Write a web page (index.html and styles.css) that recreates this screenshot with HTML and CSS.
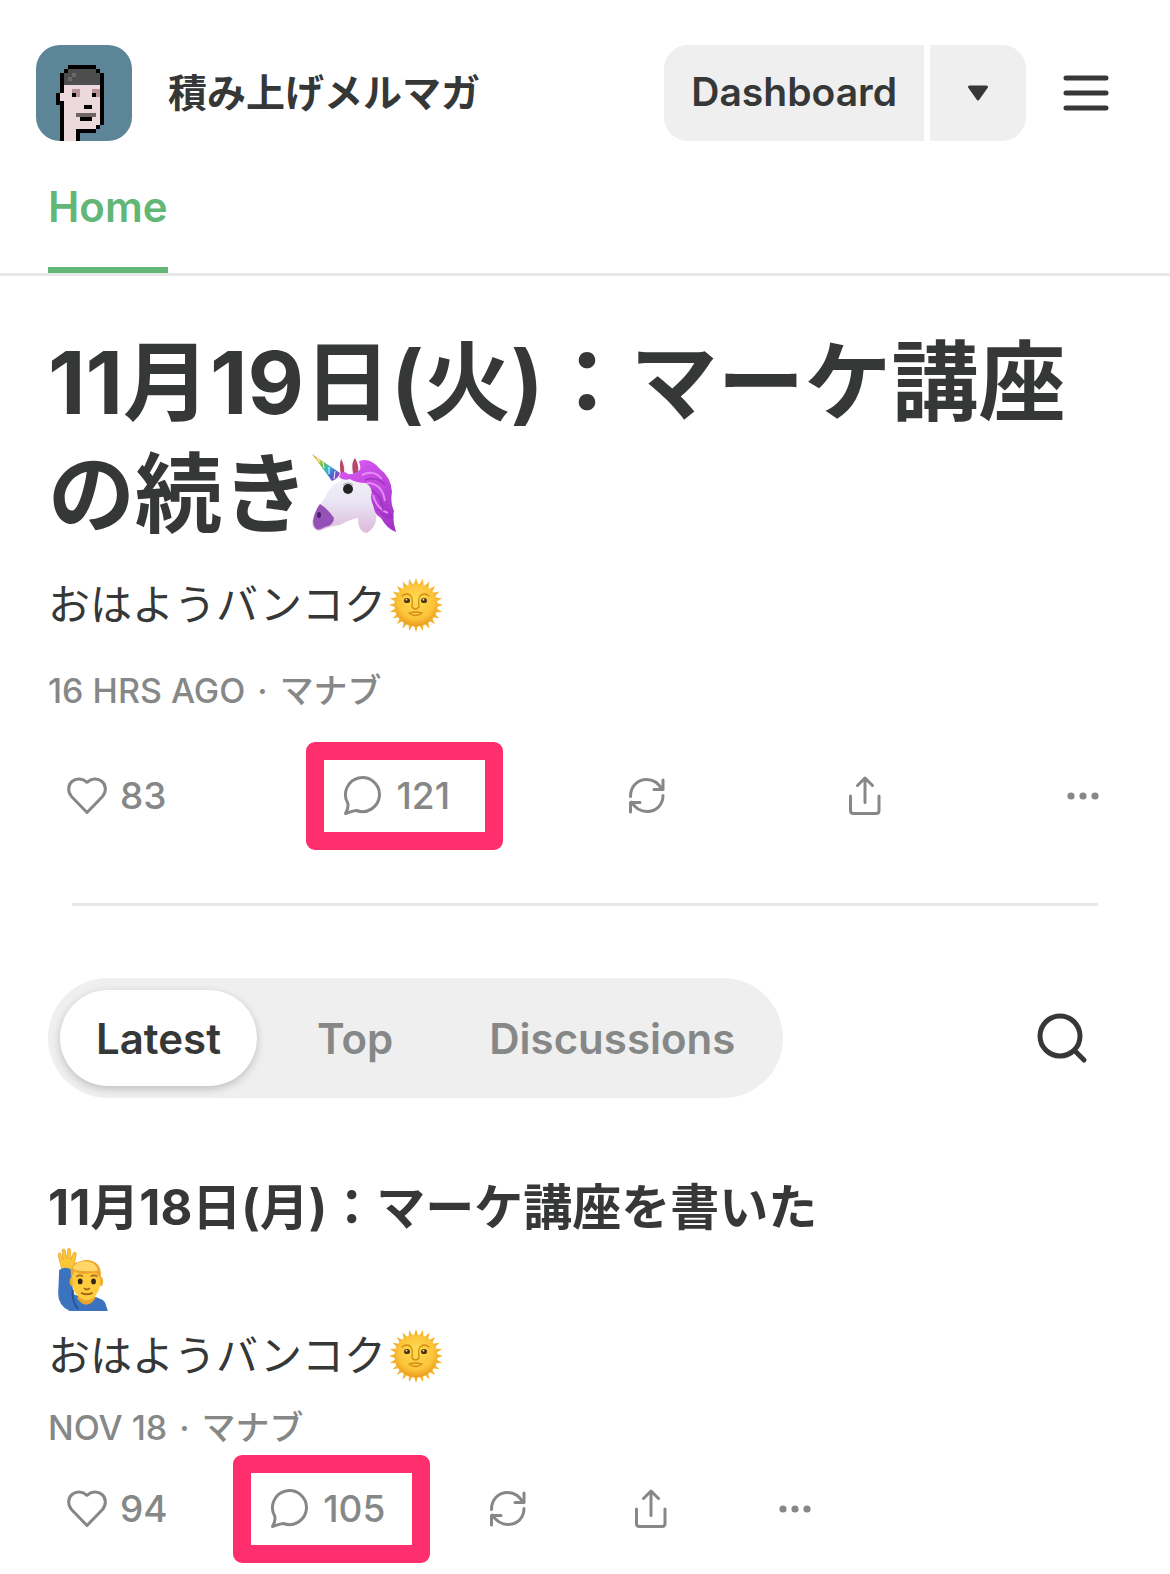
FILE: index.html
```html
<!DOCTYPE html>
<html lang="ja">
<head>
    <meta charset="UTF-8">
    <meta name="viewport" content="width=device-width, initial-scale=1.0">
    <title>積み上げメルマガ</title>
    <link rel="stylesheet" href="styles.css">
</head>
<body>
    <!-- Shared icons -->
    <svg class="sprite" aria-hidden="true">
        <symbol id="icon-heart" viewBox="0 0 42 42">
            <path d="M21 37.500 L5.500 21.500 C1.500 17 1.800 10 6 6.500 C10.500 2.800 16.500 3.300 21 7.300 C25.500 3.300 31.500 2.800 36 6.500 C40.200 10 40.500 17 36.500 21.500 Z"/>
        </symbol>
        <symbol id="icon-comment" viewBox="0 0 42 42">
            <path d="M3.500 38.500 C5.500 35 6.500 31 5.700 28 A17 17 0 1 1 14.500 35.500 C11 35.500 8 37.500 3.500 38.500 Z"/>
        </symbol>
        <symbol id="icon-restack" viewBox="0 0 42 42">
            <path d="M4.500 21.500 C4.500 11 12 4.500 20.500 4.500 C28 4.500 33 9 36 14.500 M37 5 V14.500 H28 M37 20.500 C37 30 30 36.500 21 36.500 C13.500 36.500 8.500 32 5.500 27 M4.500 37 V27.500 H14"/>
        </symbol>
        <symbol id="icon-share" viewBox="0 0 42 42">
            <path d="M21 27.500 V3 M13.500 10.500 L21 3 L28.500 10.500 M6.500 21 V35.500 Q6.500 38.500 9.500 38.500 H32 Q35 38.500 35 35.500 V21"/>
        </symbol>
        <symbol id="icon-more" viewBox="0 0 42 42">
            <g fill="currentColor" stroke="none">
                <circle cx="9" cy="21" r="3.600"/>
                <circle cx="21" cy="21" r="3.600"/>
                <circle cx="33" cy="21" r="3.600"/>
            </g>
        </symbol>
        <symbol id="emoji-sun" viewBox="0 0 54 54">
            <g fill="#f5b52e">
                <path id="rays" d="M27 0 L30 9 H24 Z M27 54 L30 45 H24 Z M0 27 L9 24 V30 Z M54 27 L45 24 V30 Z"/>
                <use href="#rays" transform="rotate(15 27 27)"/>
                <use href="#rays" transform="rotate(30 27 27)"/>
                <use href="#rays" transform="rotate(45 27 27)"/>
                <use href="#rays" transform="rotate(60 27 27)"/>
                <use href="#rays" transform="rotate(75 27 27)"/>
            </g>
            <circle cx="27" cy="27" r="21.500" fill="url(#sunFace)"/>
            <ellipse cx="18" cy="22.500" rx="3" ry="2.600" fill="#4a3210"/>
            <ellipse cx="35" cy="22.500" rx="3" ry="2.600" fill="#4a3210"/>
            <circle cx="17.500" cy="21.700" r="0.900" fill="#fff2b0"/>
            <circle cx="34.500" cy="21.700" r="0.900" fill="#fff2b0"/>
            <path d="M13 18 Q18 14 22 18 Q24 21 23 29 M40 18 Q35 14 31 18 Q29 21 30 29 M23 29 Q26.500 33 30 29 M20 35 Q26.500 33 33 35 Q26.500 40 20 35" fill="none" stroke="#d58a12" stroke-width="1.300" stroke-linecap="round"/>
        </symbol>
    </svg>
    <svg class="sprite" aria-hidden="true">
        <defs>
            <radialGradient id="sunFace" cx="50%" cy="40%" r="60%">
                <stop offset="0" stop-color="#ffdc55"/>
                <stop offset="0.700" stop-color="#fbc338"/>
                <stop offset="1" stop-color="#e99c1f"/>
            </radialGradient>
            <linearGradient id="horn" x1="0" y1="0" x2="1" y2="0.700">
                <stop offset="0" stop-color="#ee6b3c"/>
                <stop offset="0.250" stop-color="#e9c63a"/>
                <stop offset="0.450" stop-color="#62bd51"/>
                <stop offset="0.650" stop-color="#35b5d8"/>
                <stop offset="0.850" stop-color="#4b62d0"/>
                <stop offset="1" stop-color="#8b4bc4"/>
            </linearGradient>
            <linearGradient id="unicornFace" x1="0" y1="0" x2="0" y2="1">
                <stop offset="0" stop-color="#fbfaff"/>
                <stop offset="0.600" stop-color="#e9e5f4"/>
                <stop offset="1" stop-color="#dcb9dc"/>
            </linearGradient>
            <linearGradient id="mane" x1="0" y1="0" x2="1" y2="1">
                <stop offset="0" stop-color="#d65af0"/>
                <stop offset="0.500" stop-color="#c247df"/>
                <stop offset="1" stop-color="#9a2fc0"/>
            </linearGradient>
        </defs>
    </svg>

    <!-- Header -->
    <header class="topbar">
        <a class="brand" href="#">
            <!-- 24 x 24 pixel portrait -->
            <svg class="avatar" viewBox="0 0 24 24" shape-rendering="crispEdges" aria-hidden="true">
                <path fill="#5d8598" d="M0 0h24v24H0z"/>
                <path fill="#ecd9dc" d="M7 10h9v10h-1v1h-5v3H7zM6 12h1v2H6z"/>
                <path fill="#4d4d4d" d="M8 6h7v1h1v3H7V7h1z"/>
                <path fill="#686868" d="M9 7h1v1H9zM8 8h1v1H8z"/>
                <path fill="#000" d="M8 5h7v1H8zM7 6h1v1H7zM15 6h1v1h-1zM6 7h1v5H6zM16 7h1v13h-1zM5 12h1v2h1v10H6v-9H5zM15 20h1v1h-1zM10 21h5v1h-4v2h-1z"/>
                <path fill="#b69299" d="M9 11h2v2H9zM14 11h2v1h-2zM15 12h1v1h-1z"/>
                <path fill="#000" d="M9 12h1v1H9zM14 12h1v1h-1zM12 15h2v1h-2zM11 18h3v1h-3z"/>
                <path fill="#716365" d="M10 17h5v1h-5z"/>
            </svg>
            <span>積み上げメルマガ</span>
        </a>
        <div class="topbar-actions">
            <div class="split-button">
                <button type="button" class="split-main">Dashboard</button>
                <button type="button" class="split-arrow" aria-label="More options">
                    <svg width="22" height="17" viewBox="0 0 22 17" aria-hidden="true"><path d="M2.500 2 H19.500 L11 14 Z" fill="currentColor" stroke="currentColor" stroke-width="3" stroke-linejoin="round"/></svg>
                </button>
            </div>
            <button type="button" class="icon-button" aria-label="Menu">
                <svg width="48" height="48" viewBox="0 0 48 48" aria-hidden="true"><path d="M4 9 H44 M4 24 H44 M4 39 H44" stroke="currentColor" stroke-width="5" stroke-linecap="round"/></svg>
            </button>
        </div>
    </header>

    <nav class="tabs">
        <a class="tab active" href="#" aria-current="page">Home</a>
    </nav>

    <main>
        <!-- Featured post -->
        <article class="featured">
            <h1>11月19日(火)：マーケ講座の続き<svg class="emoji-large" viewBox="0 0 84 84" role="img" aria-label="ユニコーン">
                <path d="M45 8 Q57 2 68 15 Q79 23 80 38 Q78 49 82 57 Q80 66 84 78 Q75 75 69 64 Q57 56 56 40 Z" fill="url(#mane)"/>
                <path d="M29 27 L28 2 Q35 8 35 20 L39 19 Q38 6 43 1 Q52 12 46 24 Q60 28 60 41 Q60 52 64 60 Q66 72 55 79 Q46 78 46 64 Q36 66 28 71 Q18 72 7 77 Q-3 75 2 61 Q8 50 13 44 Q18 30 29 27 Z" fill="url(#unicornFace)"/>
                <path d="M29 22 Q27 10 29 5 Q33 11 32 21 Z M41 19 Q39 8 43 4 Q49 14 44 23 Z" fill="#b64769"/>
                <path d="M0 0 L28 19 Q26 25 20 27 Z" fill="url(#horn)"/>
                <path d="M5 4 L8 8 M11 8 L12 14 M17 13 L17 20 M23 17 L22 25" stroke="#f7f6ff" stroke-width="1" fill="none"/>
                <path d="M8 50 Q16 55 22 64 Q22 71 13 73 Q2 80 1 67 Q2 58 8 50 Z" fill="#9651b7"/>
                <ellipse cx="7" cy="61" rx="2" ry="3" fill="#46206d"/>
                <circle cx="36" cy="35" r="5" fill="#242424"/>
                <path d="M31 31 Q36 27 41 31" stroke="#999" stroke-width="1" fill="none"/>
                <path d="M27 23 Q30 15 36 20 Q44 21 49 14 Q58 9 66 15 Q74 22 76 31 Q70 29 66 31 Q75 38 75 49 Q75 57 82 63 Q78 67 72 63 Q59 54 59 42 Q62 35 54 29 Q44 29 38 25 Q31 27 27 23 Z" fill="url(#mane)"/>
                <path d="M50 21 Q62 15 70 25 M55 29 Q70 29 73 47 M61 41 Q65 55 76 59" stroke="#e58bf8" stroke-width="2" fill="none"/>
                <path d="M53 26 Q65 22 73 31 M60 36 Q71 44 71 57" stroke="#9c35bd" stroke-width="1.500" fill="none"/>
            </svg></h1>
            <p class="subtitle">おはようバンコク<svg class="emoji" role="img" aria-label="太陽"><use href="#emoji-sun"/></svg></p>
            <p class="meta"><time>16 hrs ago</time><span>·</span><a href="#">マナブ</a></p>
            <div class="actions">
                <button type="button" aria-label="Like, 83"><svg><use href="#icon-heart"/></svg>83</button>
                <button type="button" class="highlight" aria-label="Comments, 121"><svg><use href="#icon-comment"/></svg>121</button>
                <button type="button" aria-label="Restack"><svg><use href="#icon-restack"/></svg></button>
                <button type="button" aria-label="Share"><svg><use href="#icon-share"/></svg></button>
                <button type="button" aria-label="More"><svg><use href="#icon-more"/></svg></button>
            </div>
        </article>

        <hr>

        <!-- Post filter -->
        <div class="filter-row">
            <div class="filter">
                <button type="button" class="selected" aria-pressed="true">Latest</button>
                <button type="button" aria-pressed="false">Top</button>
                <button type="button" aria-pressed="false">Discussions</button>
            </div>
            <button type="button" class="icon-button" aria-label="Search">
                <svg width="60" height="60" viewBox="0 0 60 60" fill="none" stroke="currentColor" stroke-linecap="round" aria-hidden="true"><circle cx="28" cy="28" r="20" stroke-width="5"/><path d="M43 43 L52 52" stroke-width="5"/></svg>
            </button>
        </div>

        <!-- Post list -->
        <article class="post">
            <h2>11月18日(月)：マーケ講座を書いた<svg class="emoji-hand" viewBox="0 0 60 66" role="img" aria-label="手を挙げる男性">
                <path d="M7 23 L3 8 Q3 5 5 5 L8 12 L7 2 Q9 0 10 2 L12 11 L13 1 Q15 -1 16 2 L16 12 L19 5 Q21 3 22 6 L20 16 Q26 15 23 19 L17 26 Z" fill="#fbc536" stroke="#e6a52b" stroke-width="0.800"/>
                <path d="M4 23 Q12 18 18 24 Q16 38 20 49 Q26 51 31 50 Q46 50 52 57 L55 66 H15 Q2 60 3 46 Z" fill="#3c73be"/>
                <path d="M18 44 Q17 56 24 64" stroke="#285695" stroke-width="2" fill="none"/>
                <path d="M25 48 H40 L42 53 Q32 66 23 53 Z" fill="#eba62c"/>
                <ellipse cx="18" cy="35" rx="3" ry="5" fill="#edae2e"/>
                <ellipse cx="47" cy="35" rx="3" ry="5" fill="#edae2e"/>
                <path d="M18 26 Q18 15 32 15 Q47 15 47 29 V38 Q44 54 32 55 Q20 52 18 39 Z" fill="#ffcc3e"/>
                <path d="M17 31 Q13 17 26 14 Q37 10 45 18 Q49 23 47 33 Q46 28 41 26 Q26 29 20 24 Q19 28 17 31 Z" fill="#eca52e"/>
                <path d="M18 20 Q27 10 40 16 Q45 21 44 24 Q31 25 20 23 Z" fill="#ffd667"/>
                <ellipse cx="26" cy="35" rx="2.500" ry="3" fill="#2f2519"/>
                <ellipse cx="40" cy="35" rx="2.500" ry="3" fill="#2f2519"/>
                <path d="M22 30 Q26 27 29 30 M37 30 Q40 27 44 30" stroke="#ae711d" stroke-width="2" fill="none"/>
                <path d="M30 42 Q33 45 36 42 M27 47 Q33 50 39 47" stroke="#a76418" stroke-width="2" fill="none"/>
            </svg></h2>
            <p class="subtitle">おはようバンコク<svg class="emoji" role="img" aria-label="太陽"><use href="#emoji-sun"/></svg></p>
            <p class="meta"><time>Nov 18</time><span>·</span><a href="#">マナブ</a></p>
            <div class="actions">
                <button type="button" aria-label="Like, 94"><svg><use href="#icon-heart"/></svg>94</button>
                <button type="button" class="highlight" aria-label="Comments, 105"><svg><use href="#icon-comment"/></svg>105</button>
                <button type="button" aria-label="Restack"><svg><use href="#icon-restack"/></svg></button>
                <button type="button" aria-label="Share"><svg><use href="#icon-share"/></svg></button>
                <button type="button" aria-label="More"><svg><use href="#icon-more"/></svg></button>
            </div>
        </article>
    </main>
</body>
</html>
```

FILE: styles.css
```css
*,
*::after {
    box-sizing: border-box;
}

body {
    margin: 0;
    background-color: #fff;
    color: #363737;
    font-family: Inter, "Noto Sans CJK JP", sans-serif;
}

a {
    color: inherit;
    text-decoration: none;
}

button {
    padding: 0;
    border: none;
    background: none;
    color: inherit;
    font: inherit;
    cursor: pointer;
}

svg {
    flex-shrink: 0;
}

.sprite {
    position: absolute;
    width: 0;
    height: 0;
}

/* Header */
.topbar {
    display: flex;
    align-items: center;
    justify-content: space-between;
    padding: 45px 60px 0 36px;
}

.brand {
    display: flex;
    align-items: center;
    gap: 36px;
    font-size: 39px;
    font-weight: 600;
    line-height: 48px;
}

.avatar {
    width: 96px;
    height: 96px;
    border-radius: 24px;
}

.topbar-actions {
    display: flex;
    align-items: center;
    gap: 36px;
}

.split-button {
    display: flex;
    gap: 6px;
}

.split-main,
.split-arrow {
    height: 96px;
    background-color: #efefef;
    font-size: 39px;
    font-weight: 600;
}

.split-main {
    padding: 0 27px 3px;
    border-radius: 24px 0 0 24px;
}

.split-arrow {
    display: flex;
    align-items: center;
    justify-content: center;
    width: 96px;
    border-radius: 0 24px 24px 0;
}

.icon-button {
    display: flex;
}

.tabs {
    display: flex;
    padding: 0 48px;
    border-bottom: 3px solid #e6e7e7;
}

.tab {
    padding: 36px 0 30px;
    border-bottom: 6px solid transparent;
    font-size: 42px;
    font-weight: 600;
    line-height: 60px;
}

.tab.active {
    border-color: #62b777;
    color: #62b777;
}

/* Posts */
main {
    padding: 0 48px 45px;
}

.featured {
    padding-top: 51px;
}

h1,
h2,
p {
    margin: 0;
}

h1 {
    font-size: 87px;
    font-weight: 700;
    line-height: 112px;
}

h2 {
    font-size: 49px;
    font-weight: 700;
    line-height: 69px;
}

.emoji-large {
    width: 84px;
    height: 84px;
    margin-left: 3px;
    vertical-align: -12px;
}

.emoji-hand {
    width: 60px;
    height: 63px;
    margin-left: 6px;
    vertical-align: bottom;
}

.subtitle {
    display: flex;
    align-items: center;
    gap: 3px;
    margin-top: 24px;
    font-size: 42px;
    line-height: 60px;
}

.emoji {
    width: 54px;
    height: 54px;
}

.meta {
    display: flex;
    gap: 12px;
    margin-top: 32px;
    color: #868787;
    font-size: 34px;
    font-weight: 500;
    line-height: 48px;
    text-transform: uppercase;
}

.actions {
    display: flex;
    justify-content: space-between;
    margin-top: 60px;
    padding: 0 18px;
    color: #868787;
    font-size: 37px;
    font-weight: 500;
    line-height: 42px;
}

.actions button {
    position: relative;
    display: flex;
    align-items: center;
    gap: 12px;
}

.actions svg {
    width: 42px;
    height: 42px;
    fill: none;
    stroke: currentColor;
    stroke-width: 3;
    stroke-linecap: round;
    stroke-linejoin: round;
}

/* Frame drawn over the comment count */
.highlight::after {
    content: "";
    position: absolute;
    top: -33px;
    bottom: -33px;
    left: -36px;
    width: 197px;
    border: 18px solid #ff2f6d;
    border-radius: 9px;
    pointer-events: none;
}

hr {
    height: 3px;
    margin: 86px 24px 72px;
    border: none;
    background-color: #e6e7e7;
}

/* Filter */
.filter-row {
    display: flex;
    align-items: center;
    justify-content: space-between;
    padding-right: 30px;
}

.filter {
    display: flex;
    gap: 24px;
    padding: 12px;
    border-radius: 60px;
    background-color: #efefef;
    color: #868787;
    font-size: 42px;
    font-weight: 600;
}

.filter button {
    height: 96px;
    padding: 0 36px;
    border-radius: 48px;
}

.filter .selected {
    background-color: #fff;
    color: #363737;
    box-shadow: 0 3px 9px rgba(0, 0, 0, 0.2);
}

.post {
    max-width: 786px;
    padding-top: 75px;
}

.post .subtitle {
    margin-top: 15px;
}

.post .meta {
    margin-top: 18px;
}

.post .actions {
    margin-top: 36px;
}
```
